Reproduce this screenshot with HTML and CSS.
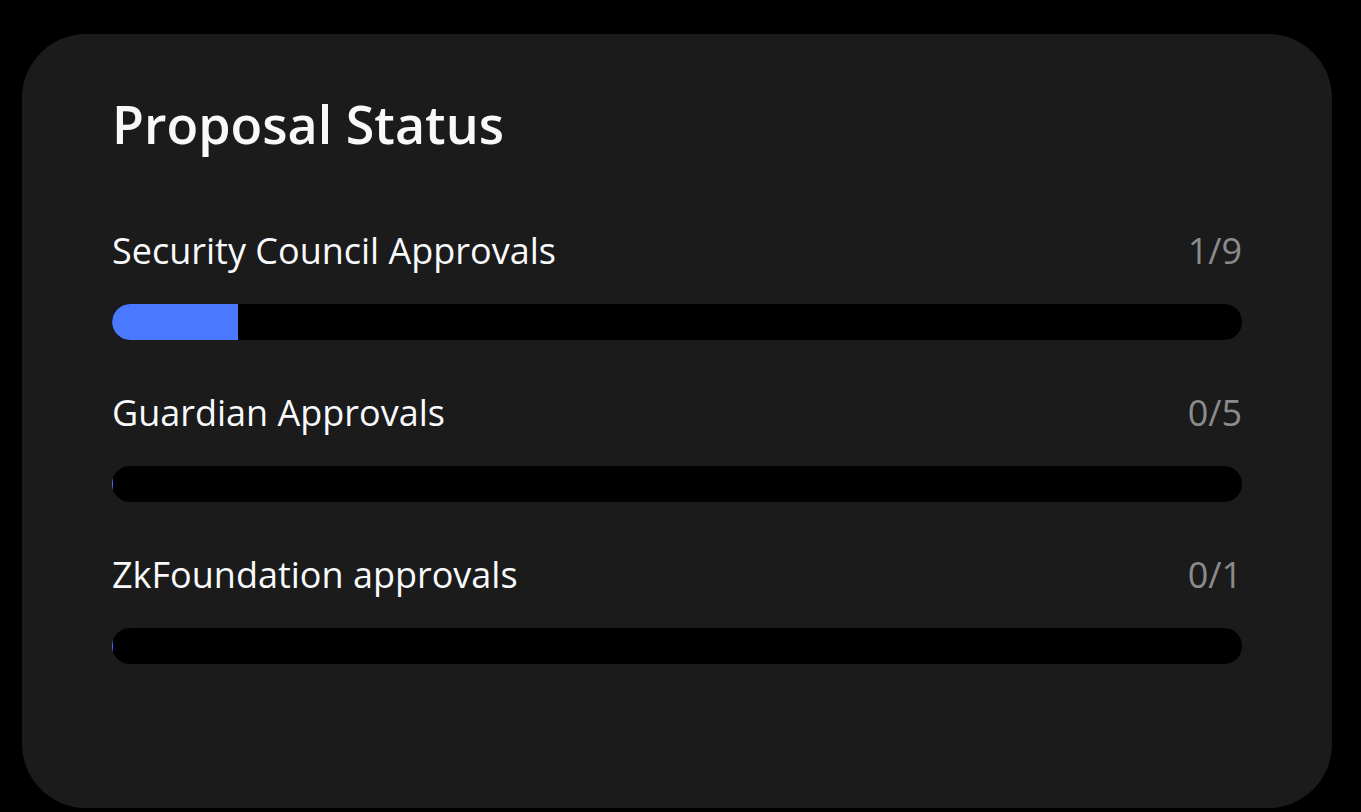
FILE: index.html
```html
<!DOCTYPE html>
<html lang="en">
<head>
<meta charset="utf-8">
<title>Proposal Status</title>
<link rel="stylesheet" href="styles.css">
</head>
<body>
<section class="card">
  <h1 class="title">Proposal Status</h1>
  <div class="rows">
    <div class="row">
      <div class="row-head">
        <span class="label">Security Council Approvals</span>
        <span class="count">1/9</span>
      </div>
      <div class="bar"><div class="fill" style="width: 11.11%"></div></div>
    </div>
    <div class="row">
      <div class="row-head">
        <span class="label">Guardian Approvals</span>
        <span class="count">0/5</span>
      </div>
      <div class="bar"><div class="fill fill-empty"></div></div>
    </div>
    <div class="row">
      <div class="row-head">
        <span class="label">ZkFoundation approvals</span>
        <span class="count">0/1</span>
      </div>
      <div class="bar"><div class="fill fill-empty"></div></div>
    </div>
  </div>
</section>
</body>
</html>
```
FILE: styles.css
```css
html, body {
  margin: 0;
  background: #000;
}
body {
  padding: 34px 29px 4px 22px;
  font-family: "Open Sans", "Noto Sans", sans-serif;
}
.card {
  box-sizing: border-box;
  height: 774px;
  background: #1b1b1b;
  border-radius: 64px;
  padding: 60px 90px 0 90px;
}
.title {
  margin: 0;
  font-size: 52px;
  font-weight: 600;
  line-height: 60px;
  color: #f8f9fb;
}
.rows {
  display: flex;
  flex-direction: column;
  gap: 47px;
  margin-top: 71px;
}
.row {
  display: flex;
  flex-direction: column;
  gap: 27px;
}
.row-head {
  display: flex;
  justify-content: space-between;
  align-items: baseline;
  font-size: 36px;
  line-height: 52px;
}
.label {
  color: #f8f9fb;
}
.count {
  color: #8b8b8b;
}
.bar {
  height: 36px;
  background: #000;
  border-radius: 18px;
  overflow: hidden;
  display: flex;
}
.fill {
  height: 100%;
  background: #4a78ff;
  border-radius: 18px 0 0 18px;
}
.fill-empty {
  width: 1px;
}
```
